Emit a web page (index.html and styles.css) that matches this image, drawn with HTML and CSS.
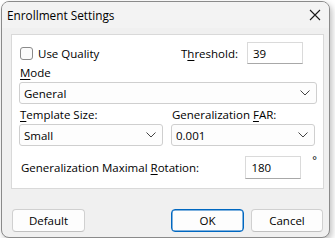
FILE: index.html
```html
<!DOCTYPE html>
<html>
<head>
<meta charset="utf-8">
<link rel="stylesheet" href="styles.css">
</head>
<body>
<div class="window">
  <div class="titlebar">
    <span class="title">Enrollment Settings</span>
    <svg class="close" width="12" height="12" viewBox="0 0 12 12"><path d="M1 1L11 11M11 1L1 11" stroke="#1a1a1a" stroke-width="1.1" fill="none"/></svg>
  </div>
  <div class="content">
    <div class="panel">
      <div class="row r1">
        <label class="check"><span class="box"></span>Use Quality</label>
        <div class="thr">
          <span class="lbl">T<u>h</u>reshold:</span>
          <span class="input num">39</span>
        </div>
      </div>
      <div class="lbl mode"><u>M</u>ode</div>
      <div class="combo wide"><span>General</span><svg class="chev" width="10" height="6" viewBox="0 0 10 6"><path d="M0.5 0.5L5 5L9.5 0.5" stroke="#444" stroke-width="1" fill="none"/></svg></div>
      <div class="cols">
        <div class="col">
          <div class="lbl"><u>T</u>emplate Size:</div>
          <div class="combo"><span>Small</span><svg class="chev" width="10" height="6" viewBox="0 0 10 6"><path d="M0.5 0.5L5 5L9.5 0.5" stroke="#444" stroke-width="1" fill="none"/></svg></div>
        </div>
        <div class="col">
          <div class="lbl">Generalization <u>F</u>AR:</div>
          <div class="combo"><span>0.001</span><svg class="chev" width="10" height="6" viewBox="0 0 10 6"><path d="M0.5 0.5L5 5L9.5 0.5" stroke="#444" stroke-width="1" fill="none"/></svg></div>
        </div>
      </div>
      <div class="row rot">
        <span class="lbl">Generalization Maximal <u>R</u>otation:</span>
        <span class="input num">180</span>
        <span class="deg">°</span>
      </div>
    </div>
    <div class="buttons">
      <button class="btn">Default</button>
      <div class="spacer"></div>
      <button class="btn ok">OK</button>
      <button class="btn cancel">Cancel</button>
    </div>
  </div>
</div>
</body>
</html>
```
FILE: styles.css
```css
html, body {
  margin: 0;
  padding: 0;
  background: #ffffff;
}
body {
  font-family: "Open Sans", "Noto Sans", sans-serif;
  font-size: 11.5px;
  color: #000;
}
.window {
  margin: 1px 0 0 1px;
  width: 327px;
  height: 235px;
  border: 1px solid #8a8a8a;
  border-radius: 8px;
  background: #f0f0f0;
  box-shadow: 2px 3px 6px rgba(0,0,0,0.25);
  overflow: hidden;
  display: flex;
  flex-direction: column;
}
.titlebar {
  height: 26px;
  flex: none;
  background: #f3f3f3;
  display: flex;
  align-items: center;
  justify-content: space-between;
  padding: 0 8px 0 5px;
}
.title {
  font-size: 11.8px;
}
.close { margin-top: 0; }
.content {
  flex: 1;
  padding: 6px 5px 0 9px;
  display: flex;
  flex-direction: column;
}
.panel {
  background: #fff;
  border: 1px solid #d9d9d9;
  height: 155px;
  flex: none;
  box-sizing: border-box;
  padding: 7px 6px 0 7px;
}
.lbl { white-space: nowrap; }
u { text-decoration-thickness: 1px; text-underline-offset: 2px; }
.row { display: flex; align-items: center; }
.r1 { height: 22px; justify-content: space-between; }
.check { display: flex; align-items: center; padding-left: 1px; }
.box {
  width: 11px;
  height: 11px;
  border: 1px solid #8a8a8a;
  border-radius: 3px;
  margin-right: 5px;
  background: #fbfbfb;
}
.thr { display: flex; align-items: center; margin-right: 14px; }
.thr .lbl { margin-right: 9px; }
.input {
  box-sizing: border-box;
  width: 56px;
  height: 22px;
  border: 1px solid #dadada;
  border-bottom-color: #a8a8a8;
  background: #fff;
  display: flex;
  align-items: center;
  padding-left: 5px;
}
.mode { margin-top: 2px; height: 14px; line-height: 14px; padding-left: 1px; }
.combo {
  box-sizing: border-box;
  height: 22px;
  border: 1px solid #cfcfcf;
  border-radius: 3px;
  background: #fdfdfd;
  display: flex;
  align-items: center;
  justify-content: space-between;
  padding: 0 6px 0 4px;
}
.wide { margin-top: 2px; }
.cols {
  display: grid;
  grid-template-columns: 144px 144px;
  column-gap: 8px;
  margin-top: 4px;
}
.col .lbl { height: 14px; line-height: 14px; margin-bottom: 2px; padding-left: 1px; }
.rot { margin-top: 10px; height: 23px; padding-left: 2px; }
.rot .lbl { width: 225px; }
.rot .input { height: 23px; }
.deg { margin-left: 11px; align-self: flex-start; font-size: 11px; line-height: 8px; }
.buttons {
  display: flex;
  margin-top: 20px;
  padding-right: 1px;
}
.spacer { flex: 1; }
.btn {
  font-family: inherit;
  font-size: 11.5px;
  width: 73px;
  height: 23px;
  background: #fdfdfd;
  border: 1px solid #d0d0d0;
  border-bottom-color: #c0c0c0;
  border-radius: 4px;
  padding: 0;
  color: #000;
  margin-left: 1px;
}
.cancel { width: 72px; }
.ok {
  border: 1px solid #0067c0;
  box-shadow: inset 0 0 0 0.5px #0067c0;
  margin-right: 6px;
}
```
